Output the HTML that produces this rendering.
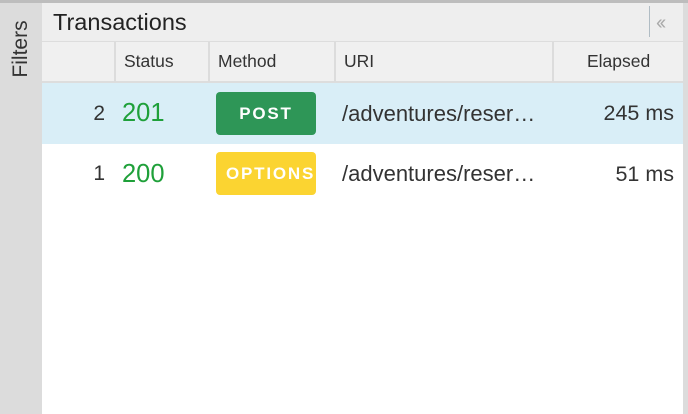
<!DOCTYPE html>
<html><head><style>
body{margin:0;width:688px;height:414px;overflow:hidden;background:#fff;font-family:"Liberation Sans",Arial,sans-serif;position:relative}
div{position:absolute;box-sizing:border-box}
.t{white-space:nowrap}
.r1{top:83px;height:61px;line-height:61px}
.r2{top:144px;height:60px;line-height:60px}
.h{top:41px;height:40px;line-height:40px;font-size:17.5px;color:#333}
</style></head><body>
<div style="left:0;top:0;width:688px;height:3px;background:#bdbdbd"></div>
<div style="left:0;top:3px;width:42px;height:411px;background:#dcdcdc"></div>
<div class="t" style="left:-29px;top:37px;width:100px;height:24px;line-height:24px;text-align:center;transform:rotate(-90deg);font-size:21px;color:#333">Filters</div>
<div style="left:42px;top:3px;width:646px;height:38px;background:#eeeeee"></div>
<div class="t" style="left:53px;top:5px;height:34px;line-height:34px;font-size:23.5px;color:#222">Transactions</div>
<div style="left:649px;top:6px;width:1px;height:31px;background:#b0bcc4"></div>
<div class="t" style="left:656px;top:12px;font-size:20px;color:#aaa;letter-spacing:-3px">‹‹</div>
<div style="left:42px;top:41px;width:646px;height:42px;background:#f0f0f0;border-top:1px solid #ddd;border-bottom:2px solid #ddd"></div>
<div style="left:114px;top:42px;width:2px;height:40px;background:#dcdcdc"></div>
<div style="left:208px;top:42px;width:2px;height:40px;background:#dcdcdc"></div>
<div style="left:334px;top:42px;width:2px;height:40px;background:#dcdcdc"></div>
<div style="left:552px;top:42px;width:2px;height:40px;background:#dcdcdc"></div>
<div class="t h" style="left:124px">Status</div>
<div class="t h" style="left:218px">Method</div>
<div class="t h" style="left:344px">URI</div>
<div class="t h" style="left:587px">Elapsed</div>
<div style="left:42px;top:83px;width:641px;height:61px;background:#d9eef7"></div>
<div style="left:683px;top:3px;width:5px;height:411px;background:#dcdcdc"></div>

<div class="t r1" style="left:60px;width:45px;text-align:right;font-size:21px;color:#333">2</div>
<div class="t r1" style="left:122px;font-size:25.5px;color:#1fa03a">201</div>
<div style="left:216px;top:92px;width:100px;height:43px;background:#2e9657;border-radius:4px;color:#fff;font-weight:bold;font-size:17px;letter-spacing:1.8px;text-align:center;line-height:43px">POST</div>
<div class="t r1" style="left:342px;font-size:22px;color:#333">/adventures/reser…</div>
<div class="t r1" style="left:560px;width:114px;text-align:right;font-size:21.5px;color:#333">245 ms</div>

<div class="t r2" style="left:60px;width:45px;text-align:right;font-size:21px;color:#333">1</div>
<div class="t r2" style="left:122px;font-size:25.5px;color:#1fa03a">200</div>
<div class="t" style="left:216px;top:152px;width:100px;height:43px;background:#fbd431;border-radius:4px;color:#fff;font-weight:bold;font-size:17px;letter-spacing:1.8px;line-height:43px;overflow:hidden;padding-left:10px">OPTIONS</div>
<div class="t r2" style="left:342px;font-size:22px;color:#333">/adventures/reser…</div>
<div class="t r2" style="left:560px;width:114px;text-align:right;font-size:21.5px;color:#333">51 ms</div>
</body></html>
